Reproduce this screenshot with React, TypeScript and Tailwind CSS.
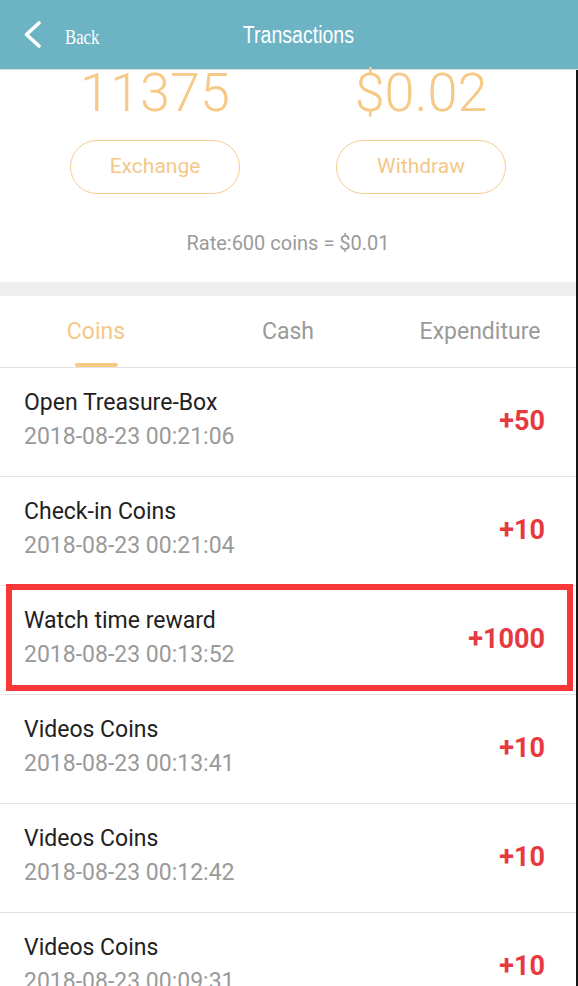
import { useState } from "react";

type Record = {
    title: string;
    time: string;
    amount: string;
    marked?: boolean;
};

const records: Record[] = [
    { title: "Open Treasure-Box", time: "2018-08-23 00:21:06", amount: "+50" },
    { title: "Check-in Coins", time: "2018-08-23 00:21:04", amount: "+10" },
    { title: "Watch time reward", time: "2018-08-23 00:13:52", amount: "+1000", marked: true },
    { title: "Videos Coins", time: "2018-08-23 00:13:41", amount: "+10" },
    { title: "Videos Coins", time: "2018-08-23 00:12:42", amount: "+10" },
    { title: "Videos Coins", time: "2018-08-23 00:09:31", amount: "+10" },
];

const tabs = ["Coins", "Cash", "Expenditure"];

function Header() {
    return (
        <header className="grid grid-cols-[1fr_auto_1fr] items-center h-[70px] bg-[#6cb3c4] border-b border-[#dcdcdc] text-white">
            <button className="flex items-center gap-[24px] pl-[24px] h-full">
                <svg width="17" height="27" viewBox="0 0 17 27" fill="none">
                    <polyline
                        points="15,2 2.5,13.5 15,25"
                        stroke="white"
                        strokeWidth="3.6"
                        strokeLinecap="round"
                        strokeLinejoin="round"
                    />
                </svg>
                <span className="inline-block origin-left scale-x-[0.76] font-['Liberation_Serif',serif] text-[22px] mt-[4px]">
                    Back
                </span>
            </button>
            <h1 className="ml-[18px] inline-block scale-x-[0.85] font-['Liberation_Sans',sans-serif] text-[23px] mt-[2px]">
                Transactions
            </h1>
            <div />
        </header>
    );
}

function Balance() {
    return (
        <section className="bg-white pb-[25px]">
            <div className="grid grid-cols-2 px-[22px]">
                {[
                    { value: "11375", action: "Exchange" },
                    { value: "$0.02", action: "Withdraw" },
                ].map((b) => (
                    <div key={b.action} className="flex flex-col items-center">
                        <p className="text-[54px] leading-[46px] font-light text-[#f6c986]">{b.value}</p>
                        <button className="mt-[24px] w-[170px] h-[54px] rounded-full border-[1.5px] border-[#f5cd8f] text-[21px] text-[#f4c888]">
                            {b.action}
                        </button>
                    </div>
                ))}
            </div>
            <p className="mt-[35px] text-center text-[20px] leading-[28px] text-[#9b9b9b]">Rate:600 coins = $0.01</p>
        </section>
    );
}

function Tabs() {
    const [active, setActive] = useState(0);
    return (
        <nav className="grid grid-cols-3 h-[72px] border-b border-[#e3e3e3] bg-white">
            {tabs.map((t, i) => (
                <button
                    key={t}
                    onClick={() => setActive(i)}
                    className="flex flex-col items-center justify-end h-full"
                >
                    <span className={`text-[23px] leading-[30px] ${i === active ? "text-[#f5c886]" : "text-[#9a9a9a]"}`}>
                        {t}
                    </span>
                    <span
                        className={`mt-[16px] w-[43px] h-[4px] rounded-full ${i === active ? "bg-[#f6c985]" : "bg-transparent"}`}
                    />
                </button>
            ))}
        </nav>
    );
}

function Row({ r }: { r: Record }) {
    return (
        <li className="relative flex items-center justify-between h-[109px] border-b border-[#e3e3e3] pl-[24px] pr-[31px]">
            <div className="flex flex-col gap-[4px] -mt-[4px]">
                <p className="text-[23px] leading-[30px] text-[#222]">{r.title}</p>
                <p className="text-[23px] leading-[30px] text-[#9a9a9a]">{r.time}</p>
            </div>
            <p className="text-[27px] leading-[32px] font-bold text-[#e63a41] -mt-[3px]">{r.amount}</p>
            {r.marked && (
                <div className="absolute left-[6px] right-[3px] -top-[2px] bottom-[3px] border-[6px] border-[#f83838] pointer-events-none" />
            )}
        </li>
    );
}

export default function App() {
    return (
        <div className="w-[578px] min-h-[986px] bg-white font-['Roboto',sans-serif]">
            <Header />
            <main className="border-r-2 border-[#151515]">
                <Balance />
                <div className="h-[14px] bg-[#eeeeee]" />
                <Tabs />
                <ul>
                    {records.map((r, i) => (
                        <Row key={i} r={r} />
                    ))}
                </ul>
            </main>
        </div>
    );
}
